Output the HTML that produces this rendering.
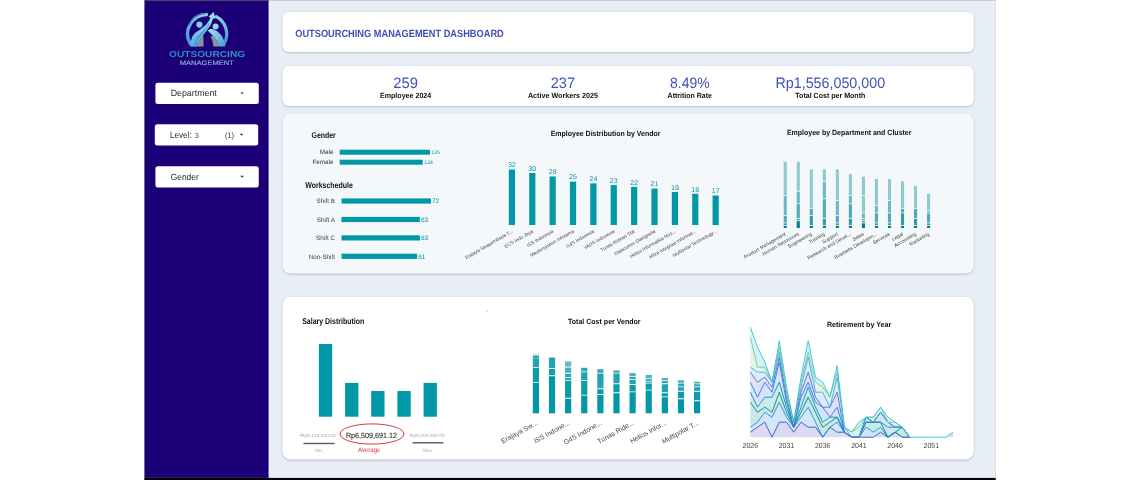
<!DOCTYPE html>
<html><head><meta charset="utf-8"><title>Outsourcing Management Dashboard</title>
<style>
html,body{margin:0;padding:0;background:#fff;width:1140px;height:480px;overflow:hidden}
svg{display:block;font-family:"Liberation Sans",sans-serif;text-rendering:geometricPrecision}
</style></head><body>
<svg width="1140" height="480" viewBox="0 0 1140 480">
<defs>
<filter id="sh" x="-5%" y="-20%" width="110%" height="140%"><feGaussianBlur stdDeviation="1.1"/></filter>
<linearGradient id="lg1" x1="0" y1="1" x2="1" y2="0"><stop offset="0" stop-color="#4a98d6"/><stop offset="1" stop-color="#8fd8f0"/></linearGradient>
<linearGradient id="lg2" x1="0" y1="1" x2="1" y2="0"><stop offset="0" stop-color="#5aaee0"/><stop offset="1" stop-color="#a5e6f5"/></linearGradient>
<linearGradient id="lg3" x1="0" y1="0" x2="1" y2="1"><stop offset="0" stop-color="#a5e3f5"/><stop offset="1" stop-color="#4a9ad4"/></linearGradient>
<linearGradient id="lg4" x1="0" y1="0" x2="0" y2="1"><stop offset="0" stop-color="#8ad4ee"/><stop offset="1" stop-color="#3f8fd0"/></linearGradient>
<linearGradient id="lgt" gradientUnits="userSpaceOnUse" x1="169" y1="0" x2="245" y2="0"><stop offset="0" stop-color="#2a82b4"/><stop offset="1" stop-color="#3199c4"/></linearGradient>
</defs>
<g opacity="0.999">
<rect x="144.3" y="0" width="851.4000000000001" height="477.9" fill="#e8eef6"/>
<rect x="144.3" y="0" width="124.30000000000001" height="477.9" fill="#1b0078"/>
<rect x="268.95000000000005" y="1" width="0.9" height="476.9" fill="#fff" opacity=".45"/>
<rect x="268.6" y="0" width="727.1" height="0.9" fill="#c6c9ce"/>
<rect x="144.3" y="0" width="124.30000000000001" height="0.95" fill="#4e4763"/>
<rect x="144.20000000000002" y="0" width="0.6" height="477.9" fill="#8a8a92"/>
<rect x="995.2" y="0" width="0.5" height="477.9" fill="#9aa0a8" opacity=".35"/>
<rect x="144.3" y="477.9" width="851.4000000000001" height="2.1000000000000227" fill="#000"/>
<g id="logo">
<path d="M190.21,43.75 A19.5,19.5 0 0 1 206.42,14.51" fill="none" stroke="url(#lg1)" stroke-width="3.4" stroke-linecap="round"/>
<path d="M188.48,25.32 A20.55,20.55 0 0 1 206.02,13.48" fill="none" stroke="#1b0078" stroke-width="0.55"/>
<path d="M216.30,16.69 A19.6,19.6 0 0 1 224.41,43.20" fill="none" stroke="url(#lg4)" stroke-width="3.2" stroke-linecap="round"/>
<circle cx="199.4" cy="24.6" r="3.1" fill="#7fcdec"/>
<circle cx="215.6" cy="26.5" r="3.0" fill="#8edbf1"/>
<path d="M190.06,46.50 L190.67,41.68 L192.25,36.43 L194.87,32.93 L200.12,29.43 L205.81,25.06 L209.31,20.25 L210.45,17.45 L208.43,16.75 L213.68,11.94 L215.43,18.94 L213.07,18.32 L211.06,24.19 L206.68,30.75 L202.92,35.30 L199.69,40.37 L197.24,46.50Z" fill="url(#lg2)"/>
<path d="M193.12,46.50 L194.44,41.25 L197.50,36.00 L202.31,31.62 L206.68,26.81 L209.75,22.00 L208.87,25.50 L205.37,30.75 L201.43,35.56 L198.37,40.37 L197.24,46.50Z" fill="#4b9fd8"/>
<path d="M207.82,30.57 L210.62,28.82 L213.68,29.52 L217.62,31.45 L221.56,35.56 L224.18,40.81 L225.49,46.50 L218.50,46.50 L217.18,41.68 L213.68,36.43 L210.18,32.93Z" fill="url(#lg3)"/>
<path d="M197.24,46.50 L199.69,40.37 L203.27,34.77 L203.45,39.50 L203.62,46.50Z" fill="#8f949c"/>
<path d="M210.62,35.65 L213.77,36.52 L217.18,41.68 L218.50,46.50 L213.51,46.50 L212.55,41.25Z" fill="#8f949c"/>
</g>
<text x="169.0" y="57.2" font-size="8.6" fill="url(#lgt)" font-weight="bold" textLength="76.1" lengthAdjust="spacingAndGlyphs">OUTSOURCING</text>
<text x="179.8" y="64.6" font-size="6.5" fill="#86a6d6" textLength="54.1" lengthAdjust="spacingAndGlyphs" stroke="#86a6d6" stroke-width="0.18">MANAGEMENT</text>
<rect x="155.4" y="82.8" width="103.4" height="21.3" rx="2.5" fill="#fff"/>
<text x="170.7" y="96.39999999999999" font-size="9" fill="#2a2a2a" textLength="46.1" lengthAdjust="spacingAndGlyphs">Department</text>
<path d="M240.4,92.39999999999999 L243.79999999999998,92.39999999999999 L242.1,94.3 Z" fill="#333"/>
<rect x="154.8" y="124.2" width="103.4" height="21.3" rx="2.5" fill="#fff"/>
<text x="170.1" y="137.8" font-size="9" fill="#2a2a2a" textLength="21.4" lengthAdjust="spacingAndGlyphs">Level:</text>
<text x="194.7" y="137.6" font-size="7.4" fill="#444">3</text>
<text x="224.9" y="137.6" font-size="8" fill="#333" textLength="9.2" lengthAdjust="spacingAndGlyphs">(1)</text>
<path d="M239.8,133.8 L243.2,133.8 L241.5,135.70000000000002 Z" fill="#333"/>
<rect x="155.4" y="166.2" width="103.4" height="21.3" rx="2.5" fill="#fff"/>
<text x="170.7" y="179.79999999999998" font-size="9" fill="#2a2a2a" textLength="28.0" lengthAdjust="spacingAndGlyphs">Gender</text>
<path d="M240.4,175.79999999999998 L243.79999999999998,175.79999999999998 L242.1,177.7 Z" fill="#333"/>
<rect x="282.5" y="12.8" width="691.2" height="40" rx="6" fill="#000" opacity=".22" filter="url(#sh)"/>
<rect x="282.5" y="12" width="691.2" height="40" rx="6" fill="#fff"/>
<text x="295.2" y="36.6" font-size="10.4" fill="#3f51b5" font-weight="bold" textLength="208.6" lengthAdjust="spacingAndGlyphs">OUTSOURCHING MANAGEMENT DASHBOARD</text>
<rect x="282.5" y="66.8" width="691.2" height="39.9" rx="6" fill="#000" opacity=".22" filter="url(#sh)"/>
<rect x="282.5" y="66" width="691.2" height="39.9" rx="6" fill="#fff"/>
<text x="405.6" y="88" font-size="15.2" fill="#3f51b5" text-anchor="middle" textLength="24.6" lengthAdjust="spacingAndGlyphs">259</text>
<text x="405.6" y="98" font-size="7.5" fill="#111" font-weight="bold" text-anchor="middle" textLength="51.2" lengthAdjust="spacingAndGlyphs">Employee 2024</text>
<text x="562.9" y="88" font-size="15.2" fill="#3f51b5" text-anchor="middle" textLength="24.4" lengthAdjust="spacingAndGlyphs">237</text>
<text x="562.9" y="98" font-size="7.5" fill="#111" font-weight="bold" text-anchor="middle" textLength="70" lengthAdjust="spacingAndGlyphs">Active Workers 2025</text>
<text x="689.8" y="88" font-size="15.2" fill="#3f51b5" text-anchor="middle" textLength="39.6" lengthAdjust="spacingAndGlyphs">8.49%</text>
<text x="689.8" y="98" font-size="7.5" fill="#111" font-weight="bold" text-anchor="middle" textLength="44.4" lengthAdjust="spacingAndGlyphs">Attrition Rate</text>
<text x="830.3" y="88" font-size="15.2" fill="#3f51b5" text-anchor="middle" textLength="109.6" lengthAdjust="spacingAndGlyphs">Rp1,556,050,000</text>
<text x="830.3" y="98" font-size="7.5" fill="#111" font-weight="bold" text-anchor="middle" textLength="70" lengthAdjust="spacingAndGlyphs">Total Cost per Month</text>
<rect x="282.5" y="114.6" width="691.2" height="159.8" rx="8" fill="#000" opacity=".22" filter="url(#sh)"/>
<rect x="282.5" y="113.8" width="691.2" height="159.8" rx="8" fill="#f5f8fb"/>
<text x="311.6" y="138.3" font-size="8.4" fill="#111" font-weight="bold" textLength="24.2" lengthAdjust="spacingAndGlyphs">Gender</text>
<text x="333.4" y="154.1" font-size="6.3" fill="#2e2e2e" text-anchor="end">Male</text>
<rect x="339.7" y="149.7" width="90.30000000000001" height="5" fill="#0097a7"/>
<text x="431.6" y="154.1" font-size="5.2" fill="#0097a7">135</text>
<text x="333.4" y="164.1" font-size="6.3" fill="#2e2e2e" text-anchor="end">Female</text>
<rect x="339.7" y="159.7" width="83.0" height="5" fill="#0097a7"/>
<text x="424.3" y="164.1" font-size="5.2" fill="#0097a7">124</text>
<text x="305.2" y="188.0" font-size="8.4" fill="#111" font-weight="bold" textLength="47.6" lengthAdjust="spacingAndGlyphs">Workschedule</text>
<text x="335" y="203.2" font-size="6.3" fill="#3a3a3a" text-anchor="end">Shift B</text>
<rect x="341.5" y="198.4" width="89.39999999999998" height="5.2" fill="#0097a7"/>
<text x="432.0" y="203.3" font-size="6.5" fill="#0097a7">72</text>
<text x="335" y="221.7" font-size="6.3" fill="#3a3a3a" text-anchor="end">Shift A</text>
<rect x="341.5" y="216.9" width="78.39999999999998" height="5.2" fill="#0097a7"/>
<text x="421.0" y="221.8" font-size="6.5" fill="#0097a7">63</text>
<text x="335" y="240.1" font-size="6.3" fill="#3a3a3a" text-anchor="end">Shift C</text>
<rect x="341.5" y="235.3" width="78.39999999999998" height="5.2" fill="#0097a7"/>
<text x="421.0" y="240.20000000000002" font-size="6.5" fill="#0097a7">63</text>
<text x="335" y="258.5" font-size="6.3" fill="#3a3a3a" text-anchor="end">Non-Shift</text>
<rect x="341.5" y="253.70000000000002" width="75.60000000000002" height="5.2" fill="#0097a7"/>
<text x="418.20000000000005" y="258.6" font-size="6.5" fill="#0097a7">61</text>
<text x="605.6" y="136.4" font-size="7.6" fill="#111" font-weight="bold" text-anchor="middle" textLength="109.8" lengthAdjust="spacingAndGlyphs">Employee Distribution by Vendor</text>
<rect x="508.80" y="169.51" width="6.2" height="55.49" fill="#0097a7"/>
<text x="511.90" y="167.31" font-size="7" fill="#0097a7" text-anchor="middle">32</text>
<text x="513.20" y="232.20" font-size="4.8" fill="#444" text-anchor="end" transform="rotate(-30 513.20 232.20)">Erajaya Swasembada T...</text>
<rect x="529.17" y="172.98" width="6.2" height="52.02" fill="#0097a7"/>
<text x="532.27" y="170.78" font-size="7" fill="#0097a7" text-anchor="middle">30</text>
<text x="533.57" y="232.20" font-size="4.8" fill="#444" text-anchor="end" transform="rotate(-30 533.57 232.20)">ECS Indo Jaya</text>
<rect x="549.55" y="176.45" width="6.2" height="48.55" fill="#0097a7"/>
<text x="552.65" y="174.25" font-size="7" fill="#0097a7" text-anchor="middle">28</text>
<text x="553.95" y="232.20" font-size="4.8" fill="#444" text-anchor="end" transform="rotate(-30 553.95 232.20)">ISS Indonesia</text>
<rect x="569.92" y="181.65" width="6.2" height="43.35" fill="#0097a7"/>
<text x="573.02" y="179.45" font-size="7" fill="#0097a7" text-anchor="middle">25</text>
<text x="574.32" y="232.20" font-size="4.8" fill="#444" text-anchor="end" transform="rotate(-30 574.32 232.20)">Mastersystem Infotama</text>
<rect x="590.30" y="183.38" width="6.2" height="41.62" fill="#0097a7"/>
<text x="593.40" y="181.18" font-size="7" fill="#0097a7" text-anchor="middle">24</text>
<text x="594.70" y="232.20" font-size="4.8" fill="#444" text-anchor="end" transform="rotate(-30 594.70 232.20)">G4S Indonesia</text>
<rect x="610.67" y="185.12" width="6.2" height="39.88" fill="#0097a7"/>
<text x="613.77" y="182.92" font-size="7" fill="#0097a7" text-anchor="middle">23</text>
<text x="615.07" y="232.20" font-size="4.8" fill="#444" text-anchor="end" transform="rotate(-30 615.07 232.20)">VADS Indonesia</text>
<rect x="631.05" y="186.85" width="6.2" height="38.15" fill="#0097a7"/>
<text x="634.15" y="184.65" font-size="7" fill="#0097a7" text-anchor="middle">22</text>
<text x="635.45" y="232.20" font-size="4.8" fill="#444" text-anchor="end" transform="rotate(-30 635.45 232.20)">Tunas Ridean Tbk</text>
<rect x="651.42" y="188.59" width="6.2" height="36.41" fill="#0097a7"/>
<text x="654.52" y="186.39" font-size="7" fill="#0097a7" text-anchor="middle">21</text>
<text x="655.82" y="232.20" font-size="4.8" fill="#444" text-anchor="end" transform="rotate(-30 655.82 232.20)">Datacomm Diangraha</text>
<rect x="671.80" y="192.05" width="6.2" height="32.95" fill="#0097a7"/>
<text x="674.90" y="189.85" font-size="7" fill="#0097a7" text-anchor="middle">19</text>
<text x="676.20" y="232.20" font-size="4.8" fill="#444" text-anchor="end" transform="rotate(-30 676.20 232.20)">Helios Informatika Nus...</text>
<rect x="692.17" y="193.79" width="6.2" height="31.21" fill="#0097a7"/>
<text x="695.27" y="191.59" font-size="7" fill="#0097a7" text-anchor="middle">18</text>
<text x="696.57" y="232.20" font-size="4.8" fill="#444" text-anchor="end" transform="rotate(-30 696.57 232.20)">Mitra Integrasi Informat...</text>
<rect x="712.55" y="195.52" width="6.2" height="29.48" fill="#0097a7"/>
<text x="715.65" y="193.32" font-size="7" fill="#0097a7" text-anchor="middle">17</text>
<text x="716.95" y="232.20" font-size="4.8" fill="#444" text-anchor="end" transform="rotate(-30 716.95 232.20)">Multipolar Technology...</text>
<text x="849.2" y="135.4" font-size="7.6" fill="#111" font-weight="bold" text-anchor="middle" textLength="124.6" lengthAdjust="spacingAndGlyphs">Employee by Department and Cluster</text>
<rect x="783.70" y="161.67" width="3.1" height="33.33" fill="#8fc9d0"/>
<rect x="783.70" y="195.83" width="3.1" height="19.17" fill="#6db9c3"/>
<rect x="783.70" y="215.83" width="3.1" height="6.67" fill="#4eaab6"/>
<rect x="783.70" y="223.33" width="3.1" height="1.67" fill="#2f9aa8"/>
<rect x="783.70" y="225.83" width="3.1" height="2.17" fill="#00808f"/>
<text x="786.30" y="235.00" font-size="5.0" fill="#444" text-anchor="end" transform="rotate(-30 786.30 235.00)">Product Management</text>
<rect x="796.73" y="161.67" width="3.1" height="29.17" fill="#8fc9d0"/>
<rect x="796.73" y="191.67" width="3.1" height="11.67" fill="#6db9c3"/>
<rect x="796.73" y="204.17" width="3.1" height="13.83" fill="#4eaab6"/>
<rect x="796.73" y="218.83" width="3.1" height="1.50" fill="#2f9aa8"/>
<rect x="796.73" y="221.17" width="3.1" height="6.83" fill="#00808f"/>
<text x="799.33" y="235.00" font-size="5.0" fill="#444" text-anchor="end" transform="rotate(-30 799.33 235.00)">Human Resources</text>
<rect x="809.76" y="169.33" width="3.1" height="38.67" fill="#8fc9d0"/>
<rect x="809.76" y="208.83" width="3.1" height="6.17" fill="#4eaab6"/>
<rect x="809.76" y="215.83" width="3.1" height="9.17" fill="#2f9aa8"/>
<rect x="809.76" y="225.83" width="3.1" height="2.17" fill="#00808f"/>
<text x="812.36" y="235.00" font-size="5.0" fill="#444" text-anchor="end" transform="rotate(-30 812.36 235.00)">Engineering</text>
<rect x="822.79" y="169.33" width="3.1" height="11.50" fill="#8fc9d0"/>
<rect x="822.79" y="181.67" width="3.1" height="16.67" fill="#6db9c3"/>
<rect x="822.79" y="199.17" width="3.1" height="18.83" fill="#4eaab6"/>
<rect x="822.79" y="218.83" width="3.1" height="6.17" fill="#2f9aa8"/>
<rect x="822.79" y="225.83" width="3.1" height="2.17" fill="#00808f"/>
<text x="825.39" y="235.00" font-size="5.0" fill="#444" text-anchor="end" transform="rotate(-30 825.39 235.00)">Training</text>
<rect x="835.82" y="169.33" width="3.1" height="30.67" fill="#8fc9d0"/>
<rect x="835.82" y="200.83" width="3.1" height="14.17" fill="#6db9c3"/>
<rect x="835.82" y="215.83" width="3.1" height="6.67" fill="#4eaab6"/>
<rect x="835.82" y="223.33" width="3.1" height="1.67" fill="#2f9aa8"/>
<rect x="835.82" y="225.83" width="3.1" height="2.17" fill="#00808f"/>
<text x="838.42" y="235.00" font-size="5.0" fill="#444" text-anchor="end" transform="rotate(-30 838.42 235.00)">Support</text>
<rect x="848.85" y="174.17" width="3.1" height="20.83" fill="#8fc9d0"/>
<rect x="848.85" y="195.83" width="3.1" height="7.50" fill="#6db9c3"/>
<rect x="848.85" y="204.17" width="3.1" height="13.83" fill="#4eaab6"/>
<rect x="848.85" y="218.83" width="3.1" height="6.17" fill="#2f9aa8"/>
<rect x="848.85" y="225.83" width="3.1" height="2.17" fill="#00808f"/>
<text x="851.45" y="235.00" font-size="5.0" fill="#444" text-anchor="end" transform="rotate(-30 851.45 235.00)">Research and Devel...</text>
<rect x="861.88" y="176.67" width="3.1" height="18.33" fill="#8fc9d0"/>
<rect x="861.88" y="195.83" width="3.1" height="16.67" fill="#8fc9d0"/>
<rect x="861.88" y="213.33" width="3.1" height="4.67" fill="#6db9c3"/>
<rect x="861.88" y="218.83" width="3.1" height="1.50" fill="#4eaab6"/>
<rect x="861.88" y="221.17" width="3.1" height="1.33" fill="#2f9aa8"/>
<rect x="861.88" y="223.33" width="3.1" height="4.67" fill="#00808f"/>
<text x="864.48" y="235.00" font-size="5.0" fill="#444" text-anchor="end" transform="rotate(-30 864.48 235.00)">Sales</text>
<rect x="874.91" y="179.00" width="3.1" height="26.00" fill="#8fc9d0"/>
<rect x="874.91" y="205.83" width="3.1" height="6.67" fill="#6db9c3"/>
<rect x="874.91" y="213.33" width="3.1" height="9.17" fill="#4eaab6"/>
<rect x="874.91" y="223.33" width="3.1" height="1.67" fill="#2f9aa8"/>
<rect x="874.91" y="225.83" width="3.1" height="2.17" fill="#00808f"/>
<text x="877.51" y="235.00" font-size="5.0" fill="#444" text-anchor="end" transform="rotate(-30 877.51 235.00)">Business Developm...</text>
<rect x="887.94" y="179.00" width="3.1" height="21.00" fill="#8fc9d0"/>
<rect x="887.94" y="200.83" width="3.1" height="11.67" fill="#6db9c3"/>
<rect x="887.94" y="213.33" width="3.1" height="9.17" fill="#4eaab6"/>
<rect x="887.94" y="223.33" width="3.1" height="1.67" fill="#2f9aa8"/>
<rect x="887.94" y="225.83" width="3.1" height="2.17" fill="#00808f"/>
<text x="890.54" y="235.00" font-size="5.0" fill="#444" text-anchor="end" transform="rotate(-30 890.54 235.00)">Services</text>
<rect x="900.97" y="181.33" width="3.1" height="26.67" fill="#8fc9d0"/>
<rect x="900.97" y="208.83" width="3.1" height="3.67" fill="#4eaab6"/>
<rect x="900.97" y="213.33" width="3.1" height="11.67" fill="#2f9aa8"/>
<rect x="900.97" y="225.83" width="3.1" height="2.17" fill="#00808f"/>
<text x="903.57" y="235.00" font-size="5.0" fill="#444" text-anchor="end" transform="rotate(-30 903.57 235.00)">Legal</text>
<rect x="914.00" y="186.17" width="3.1" height="21.83" fill="#8fc9d0"/>
<rect x="914.00" y="208.83" width="3.1" height="9.17" fill="#4eaab6"/>
<rect x="914.00" y="218.83" width="3.1" height="6.17" fill="#2f9aa8"/>
<rect x="914.00" y="225.83" width="3.1" height="2.17" fill="#00808f"/>
<text x="916.60" y="235.00" font-size="5.0" fill="#444" text-anchor="end" transform="rotate(-30 916.60 235.00)">Accounting</text>
<rect x="927.03" y="193.67" width="3.1" height="16.83" fill="#8fc9d0"/>
<rect x="927.03" y="211.33" width="3.1" height="2.00" fill="#6db9c3"/>
<rect x="927.03" y="213.83" width="3.1" height="8.67" fill="#4eaab6"/>
<rect x="927.03" y="223.33" width="3.1" height="1.67" fill="#2f9aa8"/>
<rect x="927.03" y="225.83" width="3.1" height="2.17" fill="#00808f"/>
<text x="929.63" y="235.00" font-size="5.0" fill="#444" text-anchor="end" transform="rotate(-30 929.63 235.00)">Marketing</text>
<rect x="282.5" y="297.6" width="691.2" height="162.8" rx="8" fill="#000" opacity=".22" filter="url(#sh)"/>
<rect x="282.5" y="296.8" width="691.2" height="162.8" rx="8" fill="#fff"/>
<rect x="486.6" y="310.2" width="0.8" height="1.2" fill="#888"/>
<text x="302.2" y="323.9" font-size="8.5" fill="#111" font-weight="bold" textLength="62" lengthAdjust="spacingAndGlyphs">Salary Distribution</text>
<rect x="318.9" y="344" width="13.3" height="72.70" fill="#0097a7"/>
<rect x="345.1" y="382.9" width="13.3" height="33.80" fill="#0097a7"/>
<rect x="371.2" y="391" width="13.3" height="25.70" fill="#0097a7"/>
<rect x="397.4" y="391" width="13.3" height="25.70" fill="#0097a7"/>
<rect x="423.6" y="382.9" width="13.3" height="33.80" fill="#0097a7"/>
<text x="299.2" y="437" font-size="4.6" fill="#aaa" textLength="36.6" lengthAdjust="spacingAndGlyphs">•Rp6,110,000.00</text>
<rect x="303.4" y="442.8" width="31.2" height="1.4" fill="#565b66"/>
<text x="318.9" y="451.6" font-size="4.6" fill="#aaa" text-anchor="middle">Min</text>
<ellipse cx="372" cy="434" rx="32" ry="10.1" fill="none" stroke="#cf3030" stroke-width="0.95"/>
<text x="371.4" y="437.9" font-size="7.6" fill="#2e2e2e" text-anchor="middle" textLength="51" lengthAdjust="spacingAndGlyphs" stroke="#2e2e2e" stroke-width="0.12">Rp6,509,691.12</text>
<text x="369.2" y="452.4" font-size="6.7" fill="#cc2f2f" text-anchor="middle" textLength="22.4" lengthAdjust="spacingAndGlyphs">Average</text>
<text x="410.1" y="437" font-size="4.6" fill="#aaa" textLength="34.6" lengthAdjust="spacingAndGlyphs">Rp6,950,000.00</text>
<rect x="412.5" y="442.1" width="30.8" height="1.4" fill="#565b66"/>
<text x="427.6" y="451.6" font-size="4.6" fill="#aaa" text-anchor="middle">Max</text>
<text x="604.3" y="324.2" font-size="7.6" fill="#111" font-weight="bold" text-anchor="middle" textLength="72.6" lengthAdjust="spacingAndGlyphs">Total Cost per Vendor</text>
<rect x="532.80" y="354.25" width="6.2" height="1.25" fill="#8fd0d7"/>
<rect x="532.80" y="355.75" width="6.2" height="2.25" fill="#30a9b6"/>
<rect x="532.80" y="358.25" width="6.2" height="8.75" fill="#22a3b1"/>
<rect x="532.80" y="367.75" width="6.2" height="14.25" fill="#0e9cab"/>
<rect x="532.80" y="382.75" width="6.2" height="30.50" fill="#0097a7"/>
<text x="538.00" y="424.20" font-size="6.9" fill="#444" text-anchor="end" transform="rotate(-29 538.00 424.20)">Erajaya Sw...</text>
<rect x="548.92" y="357.50" width="6.2" height="10.50" fill="#22a3b1"/>
<rect x="548.92" y="369.00" width="6.2" height="6.25" fill="#0e9cab"/>
<rect x="548.92" y="376.25" width="6.2" height="37.00" fill="#0097a7"/>
<rect x="565.04" y="361.50" width="6.2" height="5.00" fill="#60bcc6"/>
<rect x="565.04" y="367.50" width="6.2" height="5.25" fill="#48b2bd"/>
<rect x="565.04" y="373.75" width="6.2" height="3.50" fill="#30a9b6"/>
<rect x="565.04" y="378.00" width="6.2" height="2.25" fill="#22a3b1"/>
<rect x="565.04" y="381.00" width="6.2" height="16.75" fill="#0e9cab"/>
<rect x="565.04" y="398.75" width="6.2" height="14.50" fill="#0097a7"/>
<text x="570.24" y="424.20" font-size="6.9" fill="#444" text-anchor="end" transform="rotate(-29 570.24 424.20)">ISS Indone...</text>
<rect x="581.16" y="367.75" width="6.2" height="3.75" fill="#30a9b6"/>
<rect x="581.16" y="372.25" width="6.2" height="8.00" fill="#22a3b1"/>
<rect x="581.16" y="381.00" width="6.2" height="13.75" fill="#0e9cab"/>
<rect x="581.16" y="395.50" width="6.2" height="17.75" fill="#0097a7"/>
<rect x="597.28" y="369.25" width="6.2" height="3.50" fill="#30a9b6"/>
<rect x="597.28" y="373.50" width="6.2" height="14.75" fill="#22a3b1"/>
<rect x="597.28" y="389.25" width="6.2" height="4.75" fill="#0e9cab"/>
<rect x="597.28" y="395.00" width="6.2" height="18.25" fill="#0097a7"/>
<text x="602.48" y="424.20" font-size="6.9" fill="#444" text-anchor="end" transform="rotate(-29 602.48 424.20)">G4S Indone...</text>
<rect x="613.40" y="370.50" width="6.2" height="2.25" fill="#30a9b6"/>
<rect x="613.40" y="373.50" width="6.2" height="9.75" fill="#22a3b1"/>
<rect x="613.40" y="384.25" width="6.2" height="8.00" fill="#0e9cab"/>
<rect x="613.40" y="393.25" width="6.2" height="20.00" fill="#0097a7"/>
<rect x="629.52" y="373.00" width="6.2" height="3.00" fill="#48b2bd"/>
<rect x="629.52" y="376.75" width="6.2" height="2.25" fill="#30a9b6"/>
<rect x="629.52" y="379.75" width="6.2" height="4.25" fill="#22a3b1"/>
<rect x="629.52" y="385.00" width="6.2" height="6.50" fill="#0e9cab"/>
<rect x="629.52" y="392.25" width="6.2" height="21.00" fill="#0097a7"/>
<text x="634.72" y="424.20" font-size="6.9" fill="#444" text-anchor="end" transform="rotate(-29 634.72 424.20)">Tunas Ride...</text>
<rect x="645.64" y="375.00" width="6.2" height="3.25" fill="#48b2bd"/>
<rect x="645.64" y="379.00" width="6.2" height="1.75" fill="#30a9b6"/>
<rect x="645.64" y="381.50" width="6.2" height="1.25" fill="#22a3b1"/>
<rect x="645.64" y="383.50" width="6.2" height="6.25" fill="#0e9cab"/>
<rect x="645.64" y="390.50" width="6.2" height="22.75" fill="#0097a7"/>
<rect x="661.76" y="378.00" width="6.2" height="2.25" fill="#48b2bd"/>
<rect x="661.76" y="381.00" width="6.2" height="2.25" fill="#30a9b6"/>
<rect x="661.76" y="384.25" width="6.2" height="8.00" fill="#22a3b1"/>
<rect x="661.76" y="393.25" width="6.2" height="3.25" fill="#0e9cab"/>
<rect x="661.76" y="397.25" width="6.2" height="16.00" fill="#0097a7"/>
<text x="666.96" y="424.20" font-size="6.9" fill="#444" text-anchor="end" transform="rotate(-29 666.96 424.20)">Helios Infor...</text>
<rect x="677.88" y="380.25" width="6.2" height="2.50" fill="#48b2bd"/>
<rect x="677.88" y="383.50" width="6.2" height="3.00" fill="#30a9b6"/>
<rect x="677.88" y="387.25" width="6.2" height="3.50" fill="#22a3b1"/>
<rect x="677.88" y="391.75" width="6.2" height="6.50" fill="#0e9cab"/>
<rect x="677.88" y="399.25" width="6.2" height="14.00" fill="#0097a7"/>
<rect x="694.00" y="381.75" width="6.2" height="1.75" fill="#48b2bd"/>
<rect x="694.00" y="384.25" width="6.2" height="2.25" fill="#30a9b6"/>
<rect x="694.00" y="387.25" width="6.2" height="3.50" fill="#22a3b1"/>
<rect x="694.00" y="391.75" width="6.2" height="8.50" fill="#0e9cab"/>
<rect x="694.00" y="401.25" width="6.2" height="12.00" fill="#0097a7"/>
<text x="699.20" y="424.20" font-size="6.9" fill="#444" text-anchor="end" transform="rotate(-29 699.20 424.20)">Multipolar T...</text>
<text x="859.1" y="326.6" font-size="7.6" fill="#111" font-weight="bold" text-anchor="middle" textLength="64.4" lengthAdjust="spacingAndGlyphs">Retirement by Year</text>
<path d="M750.3,432.2 L757.5,427.2 L764.8,422.2 L772.0,437.2 L779.3,422.2 L786.5,422.2 L793.7,432.2 L801.0,422.2 L808.2,427.2 L815.5,427.2 L822.7,437.2 L829.9,427.2 L837.2,432.2 L844.4,432.2 L851.7,437.2 L858.9,437.2 L866.1,437.2 L873.4,437.2 L880.6,432.2 L887.9,437.2 L895.1,432.2 L902.3,437.2 L909.6,437.2 L916.8,437.2 L924.1,437.2 L931.3,437.2 L938.5,437.2 L945.8,437.2 L953.0,432.2 L953.0,437.2 L945.8,437.2 L938.5,437.2 L931.3,437.2 L924.1,437.2 L916.8,437.2 L909.6,437.2 L902.3,437.2 L895.1,437.2 L887.9,437.2 L880.6,437.2 L873.4,437.2 L866.1,437.2 L858.9,437.2 L851.7,437.2 L844.4,437.2 L837.2,437.2 L829.9,437.2 L822.7,437.2 L815.5,437.2 L808.2,437.2 L801.0,437.2 L793.7,437.2 L786.5,437.2 L779.3,437.2 L772.0,437.2 L764.8,437.2 L757.5,437.2 L750.3,437.2Z" fill="#3f51b5" fill-opacity=".2"/>
<path d="M750.3,427.2 L757.5,422.2 L764.8,412.2 L772.0,417.2 L779.3,402.2 L786.5,417.2 L793.7,427.2 L801.0,417.2 L808.2,407.2 L815.5,422.2 L822.7,437.2 L829.9,427.2 L837.2,422.2 L844.4,432.2 L851.7,437.2 L858.9,437.2 L866.1,427.2 L873.4,432.2 L880.6,427.2 L887.9,437.2 L895.1,432.2 L902.3,437.2 L909.6,437.2 L916.8,437.2 L924.1,437.2 L931.3,437.2 L938.5,437.2 L945.8,437.2 L953.0,432.2 L953.0,432.2 L945.8,437.2 L938.5,437.2 L931.3,437.2 L924.1,437.2 L916.8,437.2 L909.6,437.2 L902.3,437.2 L895.1,432.2 L887.9,437.2 L880.6,432.2 L873.4,437.2 L866.1,437.2 L858.9,437.2 L851.7,437.2 L844.4,432.2 L837.2,432.2 L829.9,427.2 L822.7,437.2 L815.5,427.2 L808.2,427.2 L801.0,422.2 L793.7,432.2 L786.5,422.2 L779.3,422.2 L772.0,437.2 L764.8,422.2 L757.5,427.2 L750.3,432.2Z" fill="#1e88e5" fill-opacity=".2"/>
<path d="M750.3,402.2 L757.5,412.2 L764.8,407.2 L772.0,412.2 L779.3,392.2 L786.5,412.2 L793.7,427.2 L801.0,412.2 L808.2,397.2 L815.5,412.2 L822.7,427.2 L829.9,422.2 L837.2,417.2 L844.4,432.2 L851.7,437.2 L858.9,437.2 L866.1,422.2 L873.4,422.2 L880.6,422.2 L887.9,437.2 L895.1,432.2 L902.3,427.2 L909.6,437.2 L916.8,437.2 L924.1,437.2 L931.3,437.2 L938.5,437.2 L945.8,437.2 L953.0,432.2 L953.0,432.2 L945.8,437.2 L938.5,437.2 L931.3,437.2 L924.1,437.2 L916.8,437.2 L909.6,437.2 L902.3,437.2 L895.1,432.2 L887.9,437.2 L880.6,427.2 L873.4,432.2 L866.1,427.2 L858.9,437.2 L851.7,437.2 L844.4,432.2 L837.2,422.2 L829.9,427.2 L822.7,437.2 L815.5,422.2 L808.2,407.2 L801.0,417.2 L793.7,427.2 L786.5,417.2 L779.3,402.2 L772.0,417.2 L764.8,412.2 L757.5,422.2 L750.3,427.2Z" fill="#00897b" fill-opacity=".2"/>
<path d="M750.3,392.2 L757.5,407.2 L764.8,397.2 L772.0,397.2 L779.3,382.2 L786.5,407.2 L793.7,427.2 L801.0,407.2 L808.2,387.2 L815.5,407.2 L822.7,422.2 L829.9,417.2 L837.2,417.2 L844.4,432.2 L851.7,437.2 L858.9,437.2 L866.1,422.2 L873.4,422.2 L880.6,422.2 L887.9,427.2 L895.1,427.2 L902.3,427.2 L909.6,437.2 L916.8,437.2 L924.1,437.2 L931.3,437.2 L938.5,437.2 L945.8,437.2 L953.0,432.2 L953.0,432.2 L945.8,437.2 L938.5,437.2 L931.3,437.2 L924.1,437.2 L916.8,437.2 L909.6,437.2 L902.3,427.2 L895.1,432.2 L887.9,437.2 L880.6,422.2 L873.4,422.2 L866.1,422.2 L858.9,437.2 L851.7,437.2 L844.4,432.2 L837.2,417.2 L829.9,422.2 L822.7,427.2 L815.5,412.2 L808.2,397.2 L801.0,412.2 L793.7,427.2 L786.5,412.2 L779.3,392.2 L772.0,412.2 L764.8,407.2 L757.5,412.2 L750.3,402.2Z" fill="#0097a7" fill-opacity=".2"/>
<path d="M750.3,382.2 L757.5,397.2 L764.8,382.2 L772.0,392.2 L779.3,362.2 L786.5,402.2 L793.7,427.2 L801.0,397.2 L808.2,382.2 L815.5,402.2 L822.7,407.2 L829.9,417.2 L837.2,407.2 L844.4,432.2 L851.7,437.2 L858.9,437.2 L866.1,417.2 L873.4,422.2 L880.6,412.2 L887.9,422.2 L895.1,427.2 L902.3,427.2 L909.6,437.2 L916.8,437.2 L924.1,437.2 L931.3,437.2 L938.5,437.2 L945.8,437.2 L953.0,432.2 L953.0,432.2 L945.8,437.2 L938.5,437.2 L931.3,437.2 L924.1,437.2 L916.8,437.2 L909.6,437.2 L902.3,427.2 L895.1,427.2 L887.9,427.2 L880.6,422.2 L873.4,422.2 L866.1,422.2 L858.9,437.2 L851.7,437.2 L844.4,432.2 L837.2,417.2 L829.9,417.2 L822.7,422.2 L815.5,407.2 L808.2,387.2 L801.0,407.2 L793.7,427.2 L786.5,407.2 L779.3,382.2 L772.0,397.2 L764.8,397.2 L757.5,407.2 L750.3,392.2Z" fill="#2979ff" fill-opacity=".2"/>
<path d="M750.3,372.2 L757.5,382.2 L764.8,377.2 L772.0,387.2 L779.3,357.2 L786.5,397.2 L793.7,427.2 L801.0,392.2 L808.2,372.2 L815.5,397.2 L822.7,407.2 L829.9,407.2 L837.2,392.2 L844.4,432.2 L851.7,437.2 L858.9,437.2 L866.1,417.2 L873.4,422.2 L880.6,412.2 L887.9,422.2 L895.1,427.2 L902.3,427.2 L909.6,437.2 L916.8,437.2 L924.1,437.2 L931.3,437.2 L938.5,437.2 L945.8,437.2 L953.0,432.2 L953.0,432.2 L945.8,437.2 L938.5,437.2 L931.3,437.2 L924.1,437.2 L916.8,437.2 L909.6,437.2 L902.3,427.2 L895.1,427.2 L887.9,422.2 L880.6,412.2 L873.4,422.2 L866.1,417.2 L858.9,437.2 L851.7,437.2 L844.4,432.2 L837.2,407.2 L829.9,417.2 L822.7,407.2 L815.5,402.2 L808.2,382.2 L801.0,397.2 L793.7,427.2 L786.5,402.2 L779.3,362.2 L772.0,392.2 L764.8,382.2 L757.5,397.2 L750.3,382.2Z" fill="#5c6bc0" fill-opacity=".2"/>
<path d="M750.3,367.2 L757.5,372.2 L764.8,372.2 L772.0,382.2 L779.3,352.2 L786.5,392.2 L793.7,422.2 L801.0,387.2 L808.2,357.2 L815.5,392.2 L822.7,392.2 L829.9,407.2 L837.2,377.2 L844.4,427.2 L851.7,437.2 L858.9,437.2 L866.1,417.2 L873.4,422.2 L880.6,412.2 L887.9,422.2 L895.1,427.2 L902.3,427.2 L909.6,437.2 L916.8,437.2 L924.1,437.2 L931.3,437.2 L938.5,437.2 L945.8,437.2 L953.0,432.2 L953.0,432.2 L945.8,437.2 L938.5,437.2 L931.3,437.2 L924.1,437.2 L916.8,437.2 L909.6,437.2 L902.3,427.2 L895.1,427.2 L887.9,422.2 L880.6,412.2 L873.4,422.2 L866.1,417.2 L858.9,437.2 L851.7,437.2 L844.4,432.2 L837.2,392.2 L829.9,407.2 L822.7,407.2 L815.5,397.2 L808.2,372.2 L801.0,392.2 L793.7,427.2 L786.5,397.2 L779.3,357.2 L772.0,387.2 L764.8,377.2 L757.5,382.2 L750.3,372.2Z" fill="#42a5f5" fill-opacity=".2"/>
<path d="M750.3,337.2 L757.5,367.2 L764.8,367.2 L772.0,382.2 L779.3,347.2 L786.5,392.2 L793.7,422.2 L801.0,382.2 L808.2,352.2 L815.5,382.2 L822.7,387.2 L829.9,397.2 L837.2,372.2 L844.4,427.2 L851.7,432.2 L858.9,427.2 L866.1,417.2 L873.4,417.2 L880.6,407.2 L887.9,422.2 L895.1,422.2 L902.3,427.2 L909.6,437.2 L916.8,437.2 L924.1,437.2 L931.3,437.2 L938.5,437.2 L945.8,437.2 L953.0,432.2 L953.0,432.2 L945.8,437.2 L938.5,437.2 L931.3,437.2 L924.1,437.2 L916.8,437.2 L909.6,437.2 L902.3,427.2 L895.1,427.2 L887.9,422.2 L880.6,412.2 L873.4,422.2 L866.1,417.2 L858.9,437.2 L851.7,437.2 L844.4,427.2 L837.2,377.2 L829.9,407.2 L822.7,392.2 L815.5,392.2 L808.2,357.2 L801.0,387.2 L793.7,422.2 L786.5,392.2 L779.3,352.2 L772.0,382.2 L764.8,372.2 L757.5,372.2 L750.3,367.2Z" fill="#81c784" fill-opacity=".2"/>
<path d="M750.3,327.2 L757.5,347.2 L764.8,362.2 L772.0,382.2 L779.3,340.7 L786.5,387.2 L793.7,422.2 L801.0,377.2 L808.2,340.7 L815.5,377.2 L822.7,382.2 L829.9,397.2 L837.2,365.7 L844.4,427.2 L851.7,432.2 L858.9,422.2 L866.1,417.2 L873.4,417.2 L880.6,407.2 L887.9,417.2 L895.1,422.2 L902.3,427.2 L909.6,437.2 L916.8,437.2 L924.1,437.2 L931.3,437.2 L938.5,437.2 L945.8,437.2 L953.0,432.2 L953.0,432.2 L945.8,437.2 L938.5,437.2 L931.3,437.2 L924.1,437.2 L916.8,437.2 L909.6,437.2 L902.3,427.2 L895.1,422.2 L887.9,422.2 L880.6,407.2 L873.4,417.2 L866.1,417.2 L858.9,427.2 L851.7,432.2 L844.4,427.2 L837.2,372.2 L829.9,397.2 L822.7,387.2 L815.5,382.2 L808.2,352.2 L801.0,382.2 L793.7,422.2 L786.5,392.2 L779.3,347.2 L772.0,382.2 L764.8,367.2 L757.5,367.2 L750.3,337.2Z" fill="#26c6da" fill-opacity=".2"/>
<path d="M750.3,432.2 L757.5,427.2 L764.8,422.2 L772.0,437.2 L779.3,422.2 L786.5,422.2 L793.7,432.2 L801.0,422.2 L808.2,427.2 L815.5,427.2 L822.7,437.2 L829.9,427.2 L837.2,432.2 L844.4,432.2 L851.7,437.2 L858.9,437.2 L866.1,437.2 L873.4,437.2 L880.6,432.2 L887.9,437.2 L895.1,432.2 L902.3,437.2 L909.6,437.2" fill="none" stroke="#3f51b5" stroke-width="0.9" stroke-linejoin="round"/>
<path d="M750.3,427.2 L757.5,422.2 L764.8,412.2 L772.0,417.2 L779.3,402.2 L786.5,417.2 L793.7,427.2 L801.0,417.2 L808.2,407.2 L815.5,422.2 L822.7,437.2 L829.9,427.2 L837.2,422.2 L844.4,432.2 L851.7,437.2 L858.9,437.2 L866.1,427.2 L873.4,432.2 L880.6,427.2 L887.9,437.2 L895.1,432.2 L902.3,437.2 L909.6,437.2" fill="none" stroke="#1e88e5" stroke-width="0.9" stroke-linejoin="round"/>
<path d="M750.3,402.2 L757.5,412.2 L764.8,407.2 L772.0,412.2 L779.3,392.2 L786.5,412.2 L793.7,427.2 L801.0,412.2 L808.2,397.2 L815.5,412.2 L822.7,427.2 L829.9,422.2 L837.2,417.2 L844.4,432.2 L851.7,437.2 L858.9,437.2 L866.1,422.2 L873.4,422.2 L880.6,422.2 L887.9,437.2 L895.1,432.2 L902.3,427.2 L909.6,437.2" fill="none" stroke="#00897b" stroke-width="0.9" stroke-linejoin="round"/>
<path d="M750.3,392.2 L757.5,407.2 L764.8,397.2 L772.0,397.2 L779.3,382.2 L786.5,407.2 L793.7,427.2 L801.0,407.2 L808.2,387.2 L815.5,407.2 L822.7,422.2 L829.9,417.2 L837.2,417.2 L844.4,432.2 L851.7,437.2 L858.9,437.2 L866.1,422.2 L873.4,422.2 L880.6,422.2 L887.9,427.2 L895.1,427.2 L902.3,427.2 L909.6,437.2" fill="none" stroke="#0097a7" stroke-width="0.9" stroke-linejoin="round"/>
<path d="M750.3,382.2 L757.5,397.2 L764.8,382.2 L772.0,392.2 L779.3,362.2 L786.5,402.2 L793.7,427.2 L801.0,397.2 L808.2,382.2 L815.5,402.2 L822.7,407.2 L829.9,417.2 L837.2,407.2 L844.4,432.2 L851.7,437.2 L858.9,437.2 L866.1,417.2 L873.4,422.2 L880.6,412.2 L887.9,422.2 L895.1,427.2 L902.3,427.2 L909.6,437.2" fill="none" stroke="#2979ff" stroke-width="0.9" stroke-linejoin="round"/>
<path d="M750.3,372.2 L757.5,382.2 L764.8,377.2 L772.0,387.2 L779.3,357.2 L786.5,397.2 L793.7,427.2 L801.0,392.2 L808.2,372.2 L815.5,397.2 L822.7,407.2 L829.9,407.2 L837.2,392.2 L844.4,432.2 L851.7,437.2 L858.9,437.2 L866.1,417.2 L873.4,422.2 L880.6,412.2 L887.9,422.2 L895.1,427.2 L902.3,427.2 L909.6,437.2" fill="none" stroke="#5c6bc0" stroke-width="0.9" stroke-linejoin="round"/>
<path d="M750.3,367.2 L757.5,372.2 L764.8,372.2 L772.0,382.2 L779.3,352.2 L786.5,392.2 L793.7,422.2 L801.0,387.2 L808.2,357.2 L815.5,392.2 L822.7,392.2 L829.9,407.2 L837.2,377.2 L844.4,427.2 L851.7,437.2 L858.9,437.2 L866.1,417.2 L873.4,422.2 L880.6,412.2 L887.9,422.2 L895.1,427.2 L902.3,427.2 L909.6,437.2" fill="none" stroke="#42a5f5" stroke-width="0.9" stroke-linejoin="round"/>
<path d="M750.3,337.2 L757.5,367.2 L764.8,367.2 L772.0,382.2 L779.3,347.2 L786.5,392.2 L793.7,422.2 L801.0,382.2 L808.2,352.2 L815.5,382.2 L822.7,387.2 L829.9,397.2 L837.2,372.2 L844.4,427.2 L851.7,432.2 L858.9,427.2 L866.1,417.2 L873.4,417.2 L880.6,407.2 L887.9,422.2 L895.1,422.2 L902.3,427.2 L909.6,437.2" fill="none" stroke="#81c784" stroke-width="0.9" stroke-linejoin="round"/>
<path d="M750.3,327.2 L757.5,347.2 L764.8,362.2 L772.0,382.2 L779.3,340.7 L786.5,387.2 L793.7,422.2 L801.0,377.2 L808.2,340.7 L815.5,377.2 L822.7,382.2 L829.9,397.2 L837.2,365.7 L844.4,427.2 L851.7,432.2 L858.9,422.2 L866.1,417.2 L873.4,417.2 L880.6,407.2 L887.9,417.2 L895.1,422.2 L902.3,427.2 L909.6,437.2 L916.8,437.2 L924.1,437.2 L931.3,437.2 L938.5,437.2 L945.8,437.2 L953.0,432.2" fill="none" stroke="#26c6da" stroke-width="0.9" stroke-linejoin="round"/>
<text x="750.3" y="447.8" font-size="7.4" fill="#444" text-anchor="middle" textLength="15.5" lengthAdjust="spacingAndGlyphs">2026</text>
<text x="786.5" y="447.8" font-size="7.4" fill="#444" text-anchor="middle" textLength="15.5" lengthAdjust="spacingAndGlyphs">2031</text>
<text x="822.7" y="447.8" font-size="7.4" fill="#444" text-anchor="middle" textLength="15.5" lengthAdjust="spacingAndGlyphs">2036</text>
<text x="858.9" y="447.8" font-size="7.4" fill="#444" text-anchor="middle" textLength="15.5" lengthAdjust="spacingAndGlyphs">2041</text>
<text x="895.1" y="447.8" font-size="7.4" fill="#444" text-anchor="middle" textLength="15.5" lengthAdjust="spacingAndGlyphs">2046</text>
<text x="931.3" y="447.8" font-size="7.4" fill="#444" text-anchor="middle" textLength="15.5" lengthAdjust="spacingAndGlyphs">2051</text>
</g>
</svg></body></html>
